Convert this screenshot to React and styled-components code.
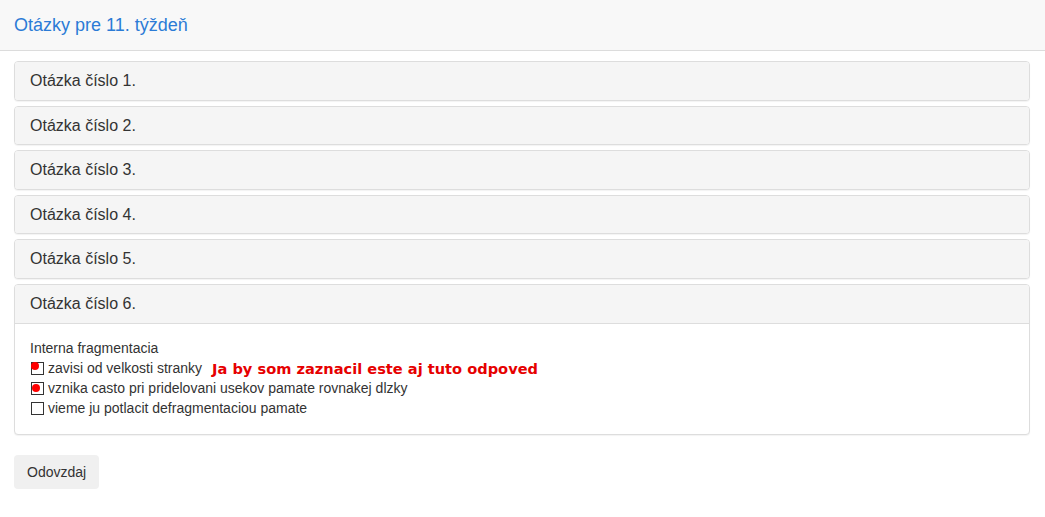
import React from "react";
import styled, { createGlobalStyle } from "styled-components";

const GlobalStyle = createGlobalStyle`
  body {
    margin: 0;
    background: #fff;
    font-family: "Liberation Sans", Arial, sans-serif;
    font-size: 14px;
    line-height: 1.42857;
    color: #333;
  }
`;

const Header = styled.div`
  height: 50px;
  background: #f8f8f8;
  border-bottom: 1px solid #dcdcdc;
  display: flex;
  align-items: center;
  padding: 0 14px;
`;

const Brand = styled.div`
  font-size: 18px;
  color: #2b7bd6;
  padding-top: 1px;
`;

const Main = styled.div`
  padding: 5px 15px 0 14px;
`;

const PanelGroup = styled.div`
  display: flex;
  flex-direction: column;
  gap: 5px;
  margin: 5px 0 20px;
`;

const Panel = styled.div`
  border: 1px solid #ddd;
  border-radius: 4px;
  background: #fff;
  box-shadow: 0 1px 1px rgba(0, 0, 0, 0.05);
  overflow: hidden;
`;

const PanelHeading = styled.div`
  background: #f5f5f5;
  padding: 10px 15px;
  font-size: 16px;
  line-height: 1.1;
  color: #333;
`;

const PanelBody = styled.div`
  border-top: 1px solid #ddd;
  padding: 15px;
`;

const Option = styled.label`
  display: flex;
  align-items: center;
  height: 20px;
`;

const Box = styled.span`
  position: relative;
  width: 11px;
  height: 11px;
  border: 1px solid #333;
  margin: 0 4px 0 1px;
  flex: none;
`;

const Dot = styled.span`
  position: absolute;
  width: 8px;
  height: 8px;
  border-radius: 50%;
  background: #f00;
  top: ${(p) => p.$top}px;
  left: ${(p) => p.$left}px;
`;

const Note = styled.span`
  font-family: "DejaVu Sans", Verdana, sans-serif;
  font-weight: bold;
  font-size: 14.6px;
  color: #e60000;
  margin-left: 10px;
  position: relative;
  top: 1px;
`;

const Button = styled.button`
  font-family: inherit;
  font-size: 14px;
  color: #333;
  background: #f0f0f0;
  border: 0;
  border-radius: 4px;
  height: 34px;
  padding: 0 13px;
`;

const questions = [1, 2, 3, 4, 5];

const options = [
  { text: "zavisi od velkosti stranky", dot: { top: -1, left: -1 }, note: true },
  { text: "vznika casto pri pridelovani usekov pamate rovnakej dlzky", dot: { top: 1, left: 0 } },
  { text: "vieme ju potlacit defragmentaciou pamate" },
];

export default function App() {
  return (
    <>
      <GlobalStyle />
      <Header>
        <Brand>Otázky pre 11. týždeň</Brand>
      </Header>
      <Main>
        <PanelGroup>
          {questions.map((n) => (
            <Panel key={n}>
              <PanelHeading>Otázka číslo {n}.</PanelHeading>
            </Panel>
          ))}
          <Panel>
            <PanelHeading>Otázka číslo 6.</PanelHeading>
            <PanelBody>
              <div>Interna fragmentacia</div>
              {options.map((o) => (
                <Option key={o.text}>
                  <Box>{o.dot && <Dot $top={o.dot.top} $left={o.dot.left} />}</Box>
                  {o.text}
                  {o.note && <Note>Ja by som zaznacil este aj tuto odpoved</Note>}
                </Option>
              ))}
            </PanelBody>
          </Panel>
        </PanelGroup>
        <Button>Odovzdaj</Button>
      </Main>
    </>
  );
}
